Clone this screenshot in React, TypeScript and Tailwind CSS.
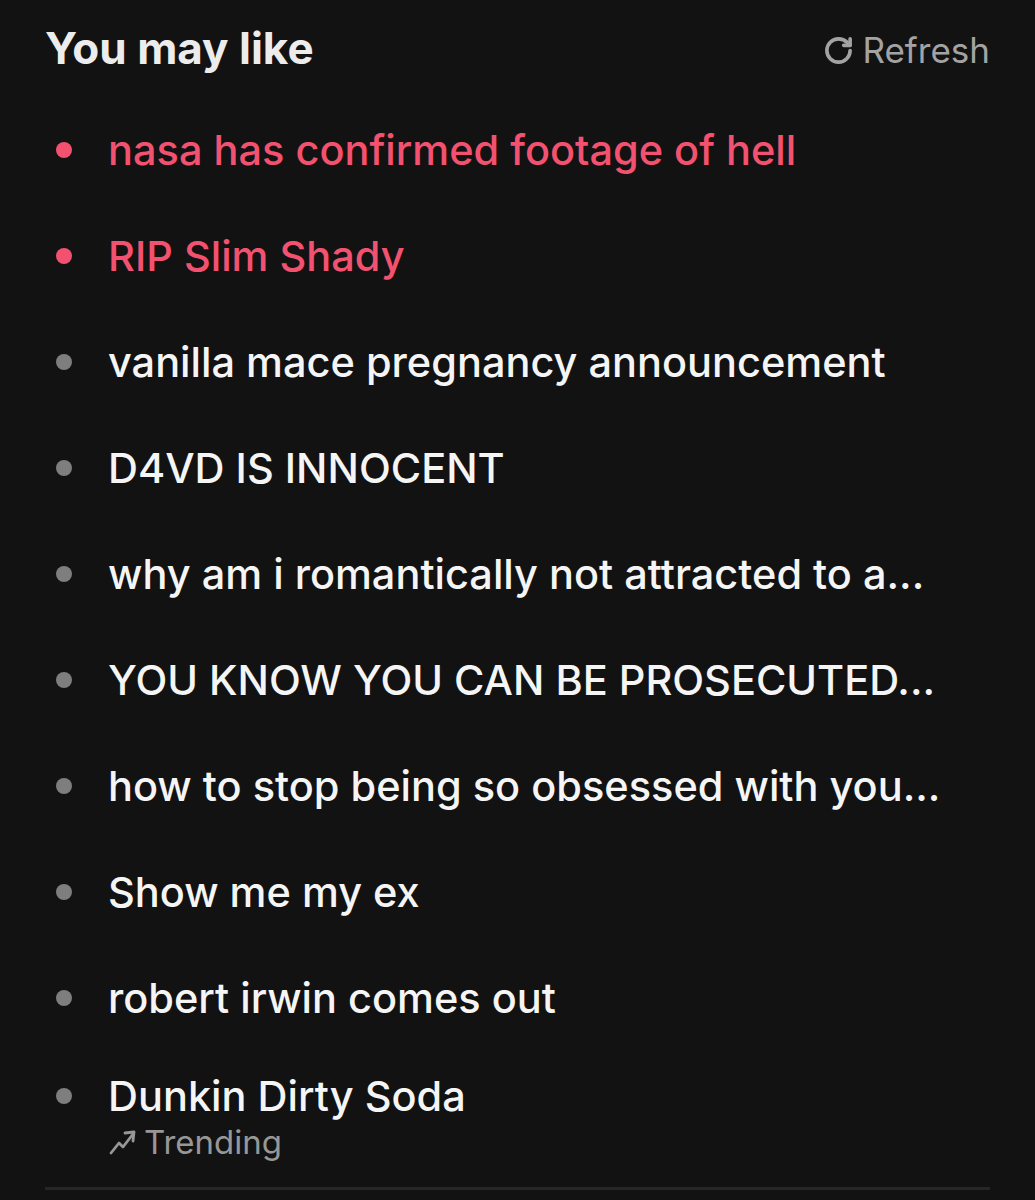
import { RotateCw } from "lucide-react";

const items = [
  { text: "nasa has confirmed footage of hell", hot: true },
  { text: "RIP Slim Shady", hot: true },
  { text: "vanilla mace pregnancy announcement" },
  { text: "D4VD IS INNOCENT" },
  { text: "why am i romantically not attracted to a..." },
  { text: "YOU KNOW YOU CAN BE PROSECUTED..." },
  { text: "how to stop being so obsessed with you..." },
  { text: "Show me my ex" },
  { text: "robert irwin comes out" },
];

function TrendIcon() {
  return (
    <svg width="30" height="30" viewBox="0 0 30 30" fill="none" stroke="currentColor" strokeWidth="2.8" strokeLinecap="round" strokeLinejoin="round">
      <polyline points="3,26 11,16 15,20 25,7" />
      <polyline points="17,6 26,5 25,14" />
    </svg>
  );
}

export default function App() {
  return (
    <div
      className="min-h-[1200px] w-full bg-[#121212] px-[45px]"
      style={{ fontFamily: "Inter, 'Noto Sans', sans-serif" }}
    >
      <div className="flex h-[97px] items-center justify-between pb-[2px]">
        <h2 className="text-[44px] font-bold leading-none text-[#ececec]">You may like</h2>
        <button className="mt-[6px] flex items-center gap-[8px] text-[35px] leading-none text-[#a3a3a3]">
          <RotateCw size={31} strokeWidth={2.8} />
          Refresh
        </button>
      </div>

      <ul>
        {items.map((it) => (
          <li key={it.text} className="flex h-[106px] items-center">
            <span
              className={
                "ml-[11px] mr-[36px] h-4 w-4 shrink-0 rounded-full " +
                (it.hot ? "bg-[#f2526f]" : "bg-[#7e7e7e]")
              }
            />
            <span
              className={
                "text-[41.5px] font-medium leading-[48px] " +
                (it.hot ? "text-[#f2526f]" : "text-[#f5f5f5]")
              }
            >
              {it.text}
            </span>
          </li>
        ))}
        <li className="flex items-start pt-[21px] pb-[23px]">
          <span className="ml-[11px] mr-[36px] mt-[16px] h-4 w-4 shrink-0 rounded-full bg-[#7e7e7e]" />
          <div className="flex flex-col">
            <span className="text-[41.5px] font-medium leading-[48px] text-[#f5f5f5]">
              Dunkin Dirty Soda
            </span>
            <span className="flex h-[44px] items-center gap-[6px] text-[33px] leading-none text-[#979797]">
              <TrendIcon />
              Trending
            </span>
          </div>
        </li>
      </ul>
      <div className="h-[3px] bg-[#262626]" />
    </div>
  );
}
